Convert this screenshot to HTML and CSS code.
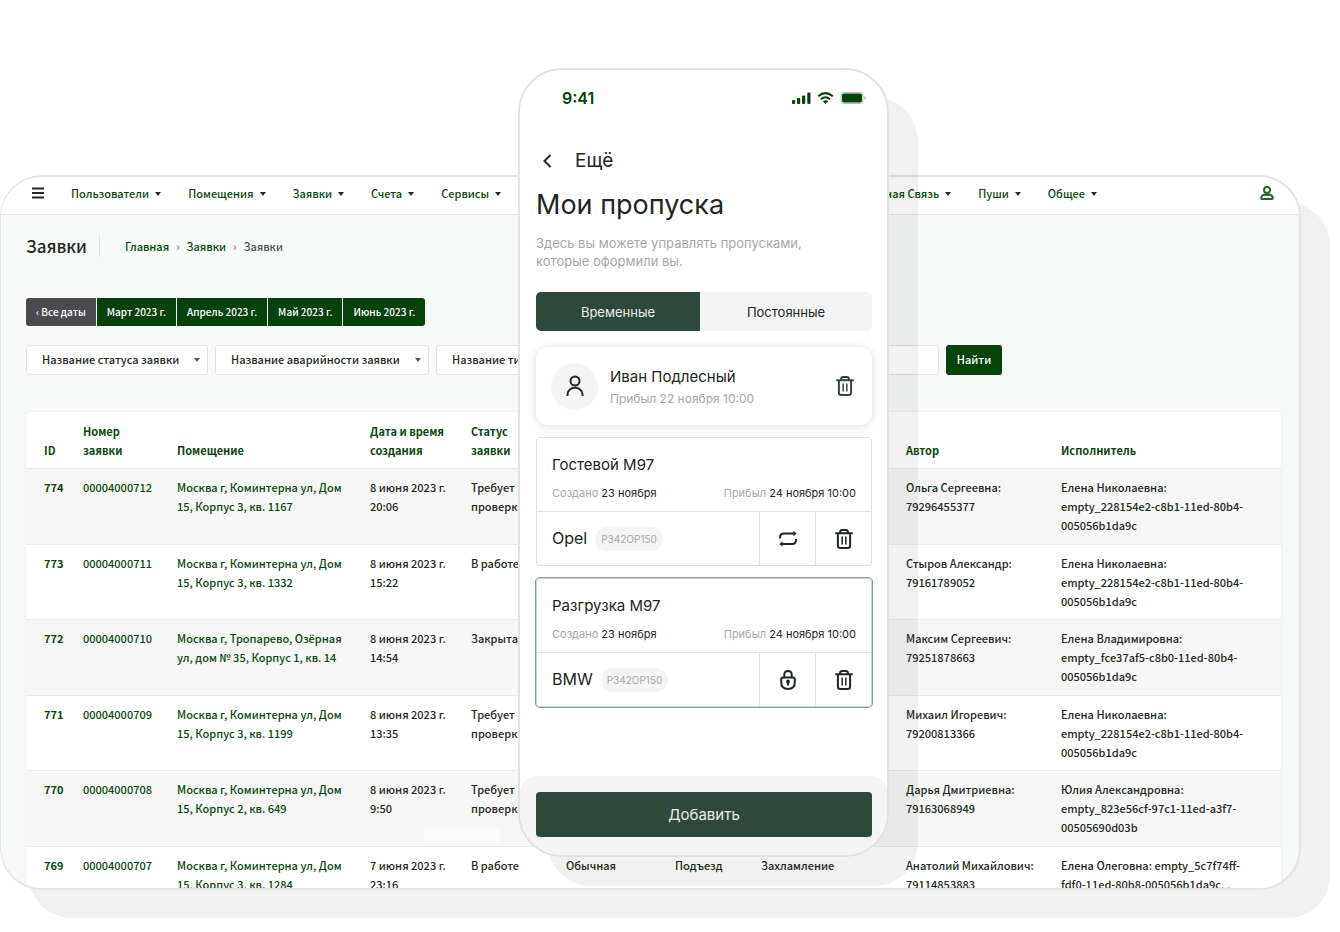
FILE: index.html
```html
<!DOCTYPE html>
<html lang="ru">
<head>
    <meta charset="UTF-8">
    <meta name="viewport" content="width=device-width, initial-scale=1.0">
    <title>Заявки</title>
    <link rel="stylesheet" href="styles.css">
</head>
<body>
    <svg class="sprite" aria-hidden="true">
        <symbol id="trash" viewBox="0 0 18 20">
            <path d="M.3 4.200h17.400M5 3.800Q5 1.100 7 1.100h4q2 0 2 2.700M2.900 4.500v12Q2.900 19 5.200 19h7.600q2.300 0 2.300-2.500v-12"/>
            <path class="slots" d="M7.200 7.500v8M10.800 7.500v8"/>
        </symbol>
    </svg>
    <div class="stage">
        <main class="admin">
            <header class="topbar">
                <button class="icon-button" aria-label="Меню">
                    <svg width="12" height="12" viewBox="0 0 12 12"><path d="M0 1.500h12M0 6h12M0 10.500h12"/></svg>
                </button>
                <nav class="menu">
                    <a href="#">Пользователи</a>
                    <a href="#">Помещения</a>
                    <a href="#">Заявки</a>
                    <a href="#">Счета</a>
                    <a href="#">Сервисы</a>
                </nav>
                <nav class="menu menu-right">
                    <a href="#">Обратная Связь</a>
                    <a href="#">Пуши</a>
                    <a href="#">Общее</a>
                </nav>
                <button class="icon-button user" aria-label="Профиль">
                    <svg width="14" height="14" viewBox="0 0 14 14"><circle cx="7" cy="4" r="3"/><path d="M4.500 8.500C2.300 9 1.200 10 1.200 12.200q0 .7.700.7h10.200q.7 0 .7-.7c0-2.200-1.100-3.200-3.300-3.700q-2.500 1-5 0z"/></svg>
                </button>
            </header>

            <div class="page-head">
                <h1>Заявки</h1>
                <nav class="crumbs">
                    <a href="#">Главная</a><i>›</i><a href="#">Заявки</a><i>›</i><span>Заявки</span>
                </nav>
            </div>

            <div class="months">
                <button class="all">‹ Все даты</button>
                <button>Март 2023 г.</button>
                <button>Апрель 2023 г.</button>
                <button>Май 2023 г.</button>
                <button>Июнь 2023 г.</button>
            </div>

            <form class="filters">
                <label class="select status"><select aria-label="Статус"><option>Название статуса заявки</option></select></label>
                <label class="select"><select aria-label="Аварийность"><option>Название аварийности заявки</option></select></label>
                <label class="select"><select aria-label="Тип"><option>Название типа заявки</option></select></label>
                <input type="text" aria-label="Поиск">
                <button type="button">Найти</button>
            </form>

            <table class="orders">
                <colgroup>
                    <col class="c-id"><col class="c-num"><col class="c-room"><col class="c-date"><col class="c-status">
                    <col class="c-kind"><col class="c-place"><col class="c-type"><col class="c-author"><col>
                </colgroup>
                <thead>
                    <tr>
                        <th>ID</th><th>Номер<br>заявки</th><th>Помещение</th><th>Дата и время<br>создания</th><th>Статус<br>заявки</th>
                        <th></th><th></th><th></th><th>Автор</th><th>Исполнитель</th>
                    </tr>
                </thead>
                <tbody>
                    <tr>
                        <td>774</td><td>00004000712</td><td>Москва г, Коминтерна ул, Дом<br>15, Корпус 3, кв. 1167</td><td>8 июня 2023 г.<br>20:06</td><td>Требует<br>проверки</td>
                        <td></td><td></td><td></td><td>Ольга Сергеевна:<br>79296455377</td><td>Елена Николаевна:<br>empty_228154e2-c8b1-11ed-80b4-<br>005056b1da9c</td>
                    </tr>
                    <tr>
                        <td>773</td><td>00004000711</td><td>Москва г, Коминтерна ул, Дом<br>15, Корпус 3, кв. 1332</td><td>8 июня 2023 г.<br>15:22</td><td>В работе</td>
                        <td></td><td></td><td></td><td>Стыров Александр:<br>79161789052</td><td>Елена Николаевна:<br>empty_228154e2-c8b1-11ed-80b4-<br>005056b1da9c</td>
                    </tr>
                    <tr>
                        <td>772</td><td>00004000710</td><td>Москва г, Тропарево, Озёрная<br>ул, дом № 35, Корпус 1, кв. 14</td><td>8 июня 2023 г.<br>14:54</td><td>Закрыта</td>
                        <td></td><td></td><td></td><td>Максим Сергеевич:<br>79251878663</td><td>Елена Владимировна:<br>empty_fce37af5-c8b0-11ed-80b4-<br>005056b1da9c</td>
                    </tr>
                    <tr>
                        <td>771</td><td>00004000709</td><td>Москва г, Коминтерна ул, Дом<br>15, Корпус 3, кв. 1199</td><td>8 июня 2023 г.<br>13:35</td><td>Требует<br>проверки</td>
                        <td></td><td></td><td></td><td>Михаил Игоревич:<br>79200813366</td><td>Елена Николаевна:<br>empty_228154e2-c8b1-11ed-80b4-<br>005056b1da9c</td>
                    </tr>
                    <tr>
                        <td>770</td><td>00004000708</td><td>Москва г, Коминтерна ул, Дом<br>15, Корпус 2, кв. 649</td><td>8 июня 2023 г.<br>9:50</td><td class="patched">Требует<br>проверки</td>
                        <td></td><td></td><td></td><td>Дарья Дмитриевна:<br>79163068949</td><td>Юлия Александровна:<br>empty_823e56cf-97c1-11ed-a3f7-<br>00505690d03b</td>
                    </tr>
                    <tr>
                        <td>769</td><td>00004000707</td><td>Москва г, Коминтерна ул, Дом<br>15, Корпус 3, кв. 1284</td><td>7 июня 2023 г.<br>23:16</td><td>В работе</td>
                        <td>Обычная</td><td>Подъезд</td><td>Захламление</td><td>Анатолий Михайлович:<br>79114853883</td><td>Елена Олеговна: empty_5c7f74ff-<br>fdf0-11ed-80b8-005056b1da9c, ,</td>
                    </tr>
                </tbody>
            </table>
        </main>

        <section class="phone">
            <div class="statusbar">
                <b>9:41</b>
                <svg width="74" height="12" viewBox="0 0 74 12">
                    <g class="fill"><rect x="0" y="8" width="3.200" height="4" rx="1"/><rect x="5" y="6" width="3.200" height="6" rx="1"/><rect x="10" y="3.500" width="3.200" height="8.500" rx="1"/><rect x="15.300" y=".5" width="3.200" height="11.500" rx="1"/><path d="M33.500 12l-2.600-2.700q2.600-2.100 5.200 0z"/></g>
                    <path class="wave" d="M26.200 4.300q7.300-6.400 14.600 0M28.900 7.200q4.600-3.900 9.200 0"/>
                    <rect class="case" x="49" y=".5" width="22" height="11" rx="3"/><path class="tip" d="M72.300 4v4q1.500-.7 1.500-2t-1.500-2z"/>
                    <rect class="fill" x="50" y="1.500" width="20" height="9" rx="2"/>
                </svg>
            </div>
            <div class="back">
                <button aria-label="Назад"><svg width="9" height="14" viewBox="0 0 9 14"><path d="M7.500 1L1.500 7l6 6"/></svg></button>
                <span>Ещё</span>
            </div>
            <h2>Мои пропуска</h2>
            <p class="lead">Здесь вы можете управлять пропусками,<br>которые оформили вы.</p>

            <div class="tabs">
                <button class="on">Временные</button>
                <button>Постоянные</button>
            </div>

            <article class="visitor">
                <div class="avatar"><svg width="18" height="22" viewBox="0 0 18 22"><circle cx="9" cy="6" r="4.500"/><path d="M1.500 21v-1.500c0-9 15-9 15 0V21"/></svg></div>
                <div class="who">
                    <strong>Иван Подлесный</strong>
                    <small>Прибыл 22 ноября 10:00</small>
                </div>
                <button aria-label="Удалить"><svg class="trash thin" width="18" height="20"><use href="#trash"/></svg></button>
            </article>

            <article class="pass">
                <div class="info">
                    <h3>Гостевой М97</h3>
                    <p><span>Создано <b>23 ноября</b></span><span>Прибыл <b>24 ноября 10:00</b></span></p>
                </div>
                <div class="car">
                    <div class="model">Opel <em>P342OP150</em></div>
                    <button aria-label="Повторить"><svg width="18" height="18" viewBox="0 0 18 18"><path d="M1 8.500V7.500Q1 3.500 5 3.500h11M17 9v1q0 4-4 4H2"/><path class="solid" d="M14.500.8L17.500 3.500l-3 2.700zM3.500 11.300L.5 14l3 2.700z"/></svg></button>
                    <button aria-label="Удалить"><svg class="trash" width="18" height="20"><use href="#trash"/></svg></button>
                </div>
            </article>

            <article class="pass active">
                <div class="info">
                    <h3>Разгрузка М97</h3>
                    <p><span>Создано <b>23 ноября</b></span><span>Прибыл <b>24 ноября 10:00</b></span></p>
                </div>
                <div class="car">
                    <div class="model">BMW <em>P342OP150</em></div>
                    <button aria-label="Заблокировать"><svg width="16" height="20" viewBox="0 0 16 20"><path d="M4.300 7.500V4.800q0-3.800 3.700-3.800t3.700 3.800v2.700M3 7.500h10q1.800 0 1.800 1.800v3q0 6.700-6.800 6.700t-6.800-6.700v-3q0-1.800 1.800-1.800zM8 12v3.500"/><circle class="hole" cx="8" cy="11.500" r="1.900"/></svg></button>
                    <button aria-label="Удалить"><svg class="trash" width="18" height="20"><use href="#trash"/></svg></button>
                </div>
            </article>

            <footer>
                <button>Добавить</button>
            </footer>
        </section>
    </div>
</body>
</html>
```
FILE: styles.css
```css
* {
    box-sizing: border-box;
}
body {
    margin: 0;
    background: #fff;
    font-family: "Noto Sans CJK SC", "Noto Sans", sans-serif;
    font-size: 11px;
    line-height: 19px;
    font-weight: 500;
    color: #1d2b21;
}
h1, h2, h3, p {
    margin: 0;
    font-weight: 400;
}
button, input, select {
    font: inherit;
    color: inherit;
}
button {
    padding: 0;
    border: none;
    background: none;
    cursor: pointer;
}
a {
    color: #0b470f;
    text-decoration: none;
}
svg {
    display: block;
    fill: none;
    stroke: currentColor;
}
.sprite {
    position: absolute;
    width: 0;
    height: 0;
}
.stage {
    position: relative;
    display: flex;
    height: 100vh;
    min-height: 900px;
    padding: 175px 39px 42px 0;
}

/* admin panel */
.admin {
    flex: 1;
    min-width: 0;
    overflow: hidden;
    border: 2px solid #e4e4e4;
    border-left-width: 1px;
    border-radius: 42px;
    background: #f8faf9;
    box-shadow: 29px 28px 0 #f1f1f1;
}
.topbar {
    display: flex;
    align-items: center;
    height: 38px;
    padding: 0 25px 5px 31px;
    border-bottom: 1px solid #e6e8e7;
    background: #fff;
}
.icon-button svg {
    stroke-width: 2;
}
.user {
    margin-left: 163px;
    color: #2c6533;
}
.menu {
    display: flex;
    gap: 27px;
    margin-left: 27px;
}
.menu-right {
    margin-left: auto;
}
.menu a::after,
.select::after {
    content: "";
    display: inline-block;
    margin-left: 6px;
    vertical-align: 2px;
    border: 3px solid transparent;
    border-top: 4px solid #1d2b21;
    border-bottom: none;
}
.page-head {
    display: flex;
    align-items: center;
    margin: 20px 25px 0;
}
.page-head h1 {
    padding-right: 12px;
    border-right: 1px solid #e2e5e3;
    font-size: 17px;
    line-height: 22px;
    font-weight: 500;
}
.crumbs {
    margin-left: 25px;
}
.crumbs i {
    margin: 0 7px;
    color: #7b847e;
    font-style: normal;
}
.crumbs span {
    color: #4b544e;
}
.months {
    display: flex;
    gap: 1px;
    margin: 41px 25px 0;
}
.months button {
    height: 28px;
    padding: 0 10px 1px;
    background: #07420b;
    color: #fff;
    font-size: 10px;
}
.months button:first-child {
    border-radius: 3px 0 0 3px;
}
.months button:last-child {
    border-radius: 0 3px 3px 0;
}
.months .all {
    background: #4b4b4f;
}
.filters {
    display: flex;
    gap: 7px;
    max-width: 976px;
    margin: 19px 25px 0;
}
.select {
    position: relative;
    width: 214px;
}
.status {
    width: 182px;
}
.select::after {
    position: absolute;
    right: 8px;
    top: 13px;
    border-top-color: #555d58;
}
.select select,
.filters input {
    width: 100%;
    height: 30px;
    padding: 0 15px 1px;
    appearance: none;
    border: 1px solid #e0e3e1;
    border-radius: 3px;
    background: #fff;
}
.filters input {
    flex: 1;
    min-width: 0;
}
.filters button {
    width: 56px;
    padding-bottom: 1px;
    border-radius: 3px;
    background: #07420b;
    color: #fff;
}
.orders {
    width: calc(100% - 43px);
    margin: 37px 18px 0 25px;
    table-layout: fixed;
    border-spacing: 0;
    border-radius: 4px;
    background: #fff;
    box-shadow: 0 0 2px #dfe3e0;
}
.c-id { width: 39px; }
.c-num { width: 94px; }
.c-room { width: 193px; }
.c-date { width: 101px; }
.c-status { width: 95px; }
.c-kind { width: 109px; }
.c-place { width: 86px; }
.c-type { width: 145px; }
.c-author { width: 155px; }
.orders th,
.orders td {
    padding: 9px 0 9px 18px;
    border-bottom: 1px solid #e9ebea;
    text-align: left;
    vertical-align: top;
    white-space: nowrap;
}
.orders th {
    padding: 10px 0 8px 18px;
    vertical-align: bottom;
    font-weight: 700;
    color: #0b470f;
}
.orders tbody tr:nth-child(odd) {
    background: #f6f7f6;
}
.orders tbody tr:nth-child(even) {
    background: #fff;
}
.orders tbody tr:nth-child(even) td {
    padding-bottom: 8px;
}
.orders tbody tr:last-child td {
    border-bottom: none;
}
.orders td:nth-child(-n+3) {
    color: #0b470f;
}
.orders td:first-child {
    font-weight: 700;
}
.patched {
    position: relative;
}
.patched::after {
    content: "";
    position: absolute;
    left: -29px;
    bottom: 2px;
    width: 76px;
    height: 16px;
    background: #fbfbfb;
}

/* phone over the panel */
.phone {
    position: absolute;
    left: 518px;
    top: 68px;
    display: flex;
    flex-direction: column;
    width: 371px;
    height: 789px;
    padding: 0 15px 0 16px;
    overflow: hidden;
    border: 2px solid #e2e2e2;
    border-radius: 44px;
    background: #fff;
    box-shadow: 29px 29px 0 rgba(0, 0, 0, 0.055);
    font-family: Inter, sans-serif;
    font-weight: 400;
    color: #202622;
}
.statusbar {
    display: flex;
    justify-content: space-between;
    align-items: center;
    height: 20px;
    margin: 18px 6px 0 26px;
    color: #07420b;
    font-size: 16px;
}
.statusbar b {
    font-weight: 600;
}
.fill {
    fill: #07420b;
    stroke: none;
}
.wave {
    stroke-width: 2;
}
.case {
    stroke: #b5b9b5;
}
.tip {
    fill: #b5b9b5;
    stroke: none;
}
.back {
    display: flex;
    align-items: center;
    gap: 23px;
    margin: 40px 0 0 7px;
    font-size: 19px;
    line-height: 25px;
}
.back svg {
    stroke-width: 2;
}
.phone h2 {
    margin-top: 15px;
    font-size: 27px;
    line-height: 34px;
}
.lead {
    margin-top: 12px;
    color: #a4aaa2;
    font-size: 13px;
    line-height: 18px;
}
.tabs {
    display: flex;
    margin-top: 22px;
    border-radius: 5px;
    overflow: hidden;
}
.tabs button {
    flex: 172;
    height: 39px;
    padding-top: 2px;
    background: #f4f4f4;
    font-size: 13px;
}
.tabs .on {
    flex: 164;
    background: #2d493b;
    color: #e9eeea;
}
.visitor {
    display: flex;
    align-items: center;
    gap: 12px;
    height: 78px;
    margin-top: 16px;
    padding: 0 18px 0 15px;
    border-radius: 12px;
    box-shadow: 0 1px 8px rgba(0, 0, 0, 0.14);
}
.avatar {
    display: flex;
    justify-content: center;
    align-items: center;
    width: 47px;
    height: 47px;
    border-radius: 50%;
    background: #f5f5f5;
}
.avatar svg {
    stroke-width: 2;
}
.who {
    flex: 1;
}
.who strong {
    display: block;
    margin-top: 3px;
    font-size: 15px;
    line-height: 22px;
    font-weight: 400;
}
.who small {
    display: block;
    color: #a4aaa2;
    font-size: 12px;
    line-height: 22px;
}
.trash {
    stroke-width: 2;
}
.trash.thin {
    color: #36463d;
}
.slots {
    stroke-width: 1.5;
}
.pass {
    margin-top: 12px;
    border: 1px solid #dfe1e0;
    border-radius: 4px;
}
.pass.active {
    border-color: #c9d6ce;
    box-shadow: 0 0 0 1px #86a292;
}
.info {
    height: 74px;
    padding: 16px 15px 0;
    border-bottom: 1px solid #e2e2e2;
}
.info h3 {
    font-size: 15px;
    line-height: 22px;
}
.info p {
    display: flex;
    justify-content: space-between;
    margin-top: 8px;
    color: #a4aaa2;
    font-size: 11px;
    line-height: 18px;
}
.info b {
    font-weight: 400;
    color: #202622;
}
.car {
    display: flex;
    height: 53px;
}
.car button {
    display: flex;
    justify-content: center;
    align-items: center;
    width: 56px;
    border-left: 1px solid #e2e2e2;
}
.car button svg {
    stroke-width: 2;
}
.model {
    display: flex;
    flex: 1;
    align-items: center;
    gap: 8px;
    padding-left: 15px;
    font-size: 16px;
}
.model em {
    padding: 0 6px;
    border-radius: 12px;
    background: #f5f5f5;
    color: #a4aaa2;
    font-size: 10px;
    line-height: 24px;
    font-style: normal;
}
.hole,
.solid {
    fill: currentColor;
    stroke: none;
}
footer {
    margin: auto -15px 0 -16px;
    padding: 16px 15px 18px 16px;
    border-radius: 16px 16px 0 0;
    background: #f5f5f5;
}
footer button {
    width: 100%;
    height: 45px;
    border-radius: 4px;
    background: #2d493b;
    color: #e9eeea;
    font-size: 15px;
}
```
